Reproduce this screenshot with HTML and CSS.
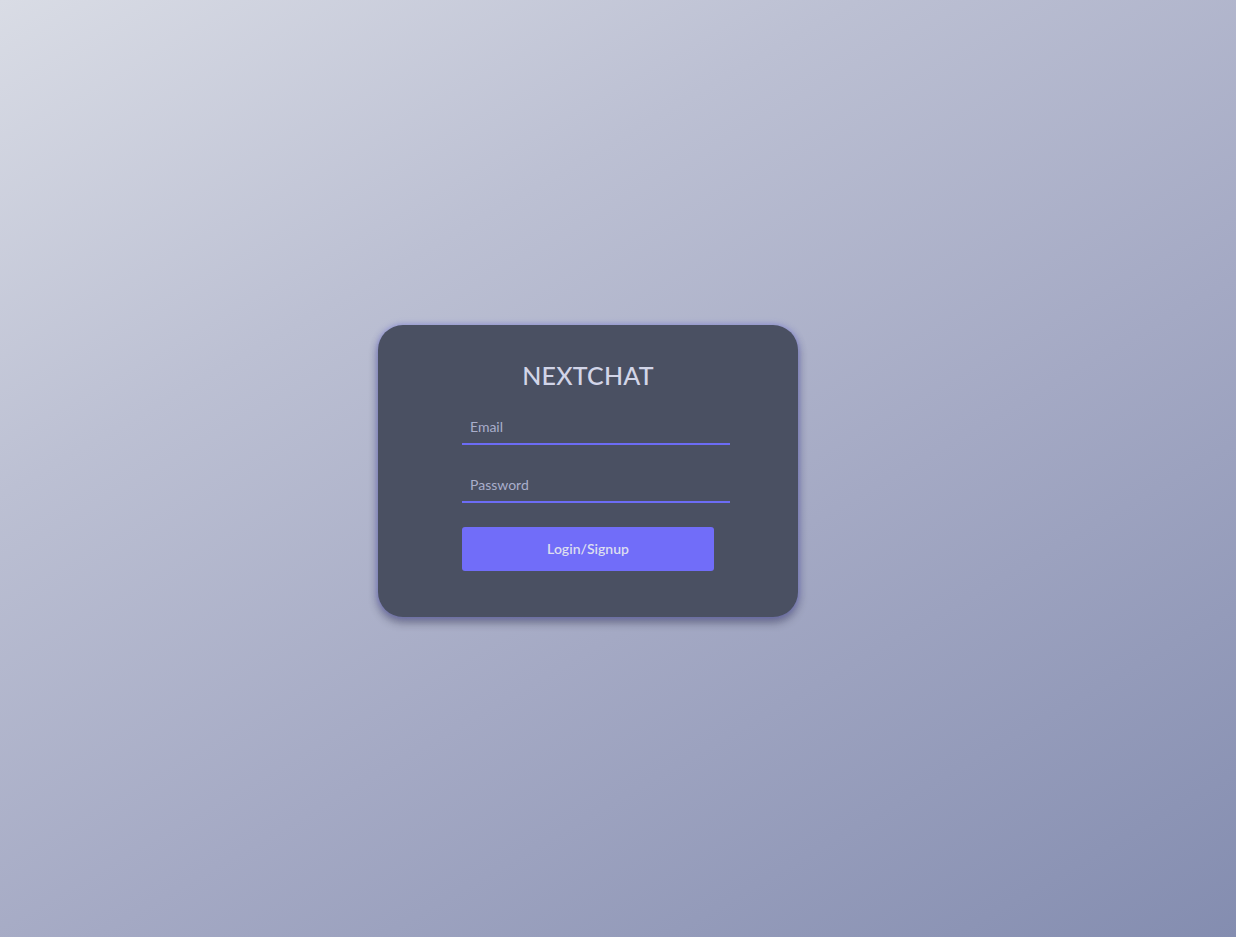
FILE: index.html
```html
<!DOCTYPE html>
<html lang="en">
<head>
<meta charset="utf-8">
<title>NextChat</title>
<link rel="stylesheet" href="styles.css">
</head>
<body>
<main class="page">
  <section class="card">
    <h1 class="title">NEXTCHAT</h1>
    <form class="form">
      <input class="field" type="email" placeholder="Email">
      <input class="field" type="password" placeholder="Password">
      <button class="btn" type="button">Login/Signup</button>
    </form>
  </section>
</main>
</body>
</html>
```
FILE: styles.css
```css
html, body {
  margin: 0;
  height: 100%;
}
body {
  background: linear-gradient(150deg, #d9dce5 0%, #bcc0d3 30%, #a4a9c4 60%, #848db0 100%);
  font-family: "Lato", "Noto Sans", sans-serif;
}
.page {
  height: 100%;
  display: flex;
  align-items: center;
  justify-content: center;
  padding-right: 60px;
  padding-top: 4px;
  box-sizing: border-box;
}
.card {
  width: 420px;
  box-sizing: border-box;
  padding: 35px 0 46px;
  background: #4a5062;
  border-radius: 25px;
  box-shadow: 0 0 6px rgba(112, 112, 240, 0.55), 0 5px 10px rgba(20, 20, 40, 0.45);
  display: flex;
  flex-direction: column;
  align-items: center;
}
.title {
  margin: 0 0 20px;
  font-size: 25px;
  line-height: 30px;
  font-weight: 500;
  color: #d2d5e8;
  letter-spacing: 0.2px;
}
.form {
  width: 252px;
  display: flex;
  flex-direction: column;
  align-items: flex-start;
}
.field {
  width: 252px;
  padding: 8px;
  margin: 0;
  box-sizing: content-box;
  height: 17px;
  border: none;
  border-bottom: 2px solid #6c6cf5;
  background: transparent;
  font-family: inherit;
  font-size: 14px;
  color: #d0d3e6;
  outline: none;
}
.field + .field {
  margin-top: 23px;
}
.field::placeholder {
  color: #a9aecb;
}
.btn {
  margin-top: 24px;
  width: 252px;
  height: 44px;
  border: none;
  border-radius: 3px;
  background: #716df9;
  color: #dcdef0;
  font-family: inherit;
  font-size: 14px;
  font-weight: 600;
  cursor: pointer;
}
```
